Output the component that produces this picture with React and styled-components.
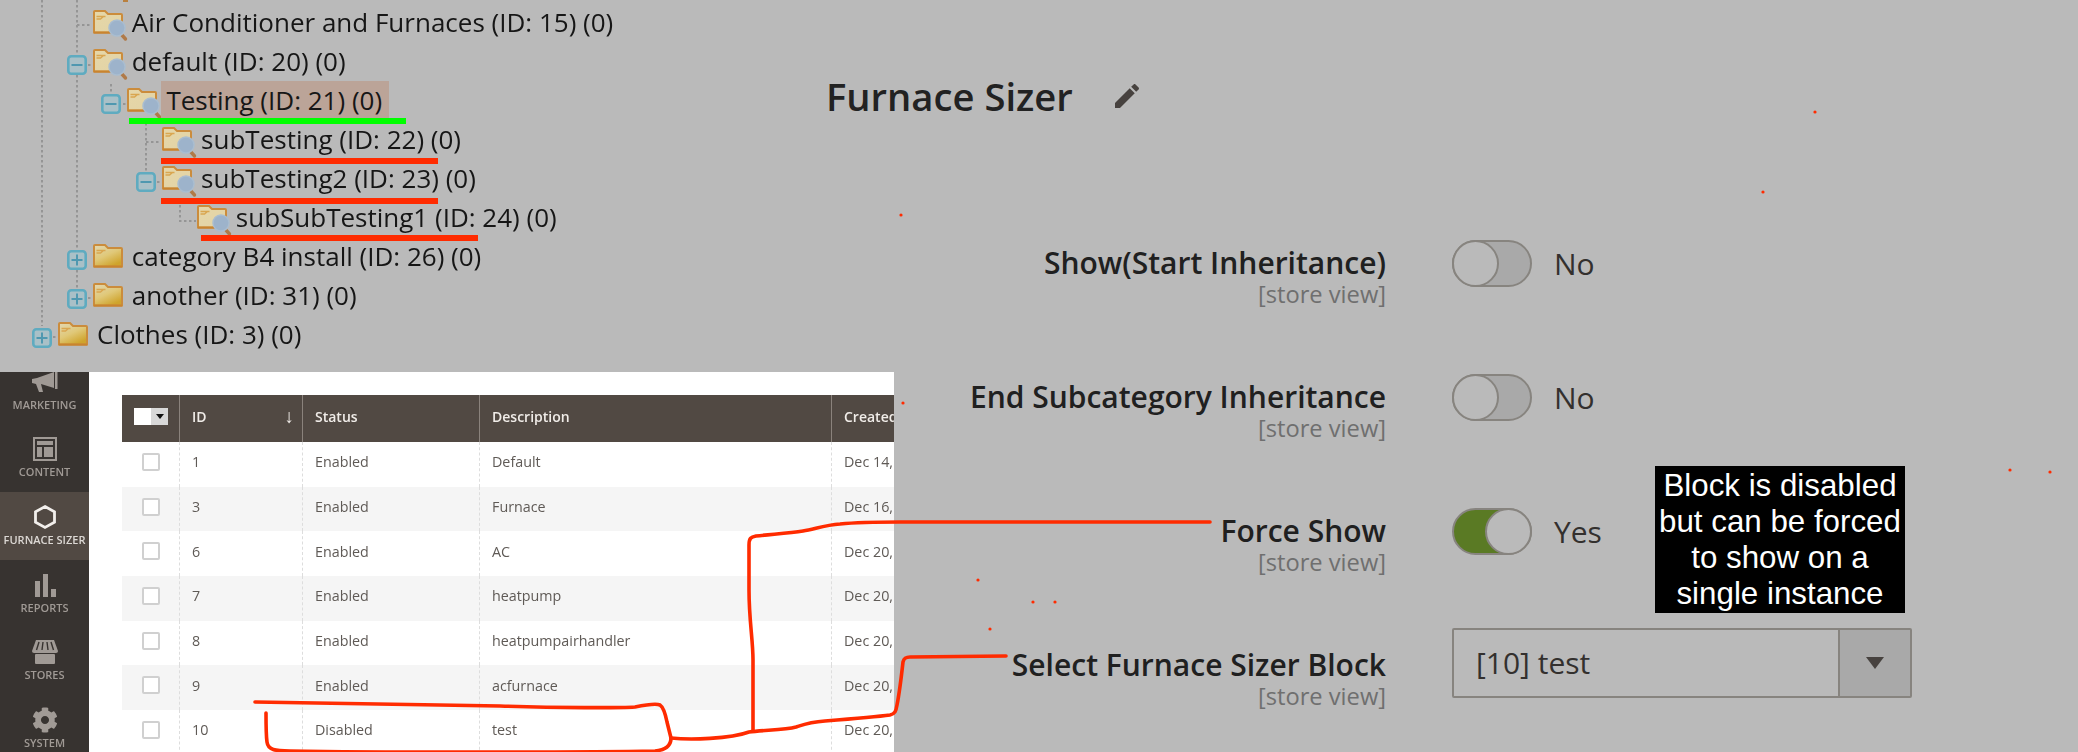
import React from 'react'
import styled, { createGlobalStyle } from 'styled-components'
import { FaCog } from 'react-icons/fa'

const GlobalStyle = createGlobalStyle`
    html, body {
        margin: 0;
        padding: 0;
        background: #bababa;
    }
    body {
        font-family: "Open Sans", "Noto Sans", sans-serif;
        overflow: hidden;
    }
`

const Page = styled.div`
    position: relative;
    width: 2078px;
    height: 752px;
    display: flex;
    overflow: hidden;
    background: #bababa;
`
const LeftCol = styled.div`
    width: 826px;
    flex: none;
    display: flex;
    flex-direction: column;
`
const RightCol = styled.div`
    flex: 1;
    padding-top: 73px;
`

/* ---- category tree ---- */
const Tree = styled.div`
    position: relative;
    height: 372px;
    padding-top: 2px;
    box-sizing: border-box;
    filter: blur(0.45px);
`
const TreeLines = styled.svg`
    position: absolute;
    left: 0;
    top: 0;
`
const TreeRow = styled.div`
    position: relative;
    height: 39px;
    display: flex;
    align-items: center;
    padding-left: ${p => 32 + p.$level * 34.7}px;
`
const Expander = styled.span`
    width: 20px;
    height: 20px;
    margin: 8px 6px 0 0;
    flex: none;
`
const Folder = styled.svg`
    width: 30px;
    height: 24px;
    flex: none;
    overflow: visible;
`
const TreeLabel = styled.span`
    margin-left: ${p => (p.$selected ? 4 : 9)}px;
    padding: ${p => (p.$selected ? '0 7px 0 5px' : '0')};
    height: 38px;
    line-height: 38px;
    font-size: 26px;
    color: #161616;
    white-space: nowrap;
    background: ${p => (p.$selected ? '#bba498' : 'transparent')};
`

const ExpanderIcon = ({ open }) => (
    <Expander>
        <svg width="20" height="20" viewBox="0 0 20 20">
            <rect x="1.3" y="1.3" width="17.4" height="17.4" rx="3" fill="#a9c0c7" stroke="#5fabc0" strokeWidth="2.6" />
            <rect x="4.5" y="9" width="11" height="2" fill="#4f98b0" />
            {!open && <rect x="9" y="4.5" width="2" height="11" fill="#4f98b0" />}
        </svg>
    </Expander>
)

const FolderIcon = ({ search }) => (
    <Folder viewBox="0 0 30 24">
        <defs>
            <linearGradient id="openBody" x1="0" y1="0" x2="1" y2="1">
                <stop offset="0" stopColor="#e6d7a8" />
                <stop offset="1" stopColor="#e2d3a6" />
            </linearGradient>
            <linearGradient id="closedBody" x1="0" y1="0" x2="0.6" y2="1">
                <stop offset="0" stopColor="#e2d8b4" />
                <stop offset="0.55" stopColor="#e0c878" />
                <stop offset="1" stopColor="#cfa42c" />
            </linearGradient>
        </defs>
        <path
            d="M1 22.5V2a1 1 0 0 1 1-1h10l3 3h13a1 1 0 0 1 1 1v17.5z"
            fill={search ? 'url(#openBody)' : 'url(#closedBody)'}
            stroke="#cb8c3c"
            strokeWidth="2"
        />
        <path d="M3.5 6.5h9M3.5 9h4l3-2.5" fill="none" stroke="#d9a650" strokeWidth="1.4" />
        <rect x="1" y="21.6" width="28" height="2" fill="#c9842f" />
        {search && (
            <g>
                <path d="M28 24l4.5 5" stroke="#b07a48" strokeWidth="3.4" strokeLinecap="round" />
                <circle cx="24" cy="18" r="8" fill="#9db3cb" stroke="#a9bdd0" strokeWidth="1.5" />
            </g>
        )}
    </Folder>
)

const treeRows = [
    { level: 1, search: true, text: 'Air Conditioner and Furnaces (ID: 15) (0)' },
    { level: 1, search: true, toggle: 'open', text: 'default (ID: 20) (0)' },
    { level: 2, search: true, toggle: 'open', selected: true, text: 'Testing (ID: 21) (0)' },
    { level: 3, search: true, text: 'subTesting (ID: 22) (0)' },
    { level: 3, search: true, toggle: 'open', text: 'subTesting2 (ID: 23) (0)' },
    { level: 4, search: true, text: 'subSubTesting1 (ID: 24) (0)' },
    { level: 1, toggle: 'closed', text: 'category B4 install (ID: 26) (0)' },
    { level: 1, toggle: 'closed', text: 'another (ID: 31) (0)' },
    { level: 0, toggle: 'closed', text: 'Clothes (ID: 3) (0)' },
]

/* ---- grid panel ---- */
const Panel = styled.div`
    width: 894px;
    height: 380px;
    display: flex;
    overflow: hidden;
    background: #fff;
    filter: blur(0.6px);
`
const Sidebar = styled.div`
    width: 89px;
    flex: none;
    margin-top: -15px;
    background: #373330;
`
const NavItem = styled.div`
    height: 67.7px;
    display: flex;
    flex-direction: column;
    align-items: center;
    justify-content: flex-end;
    padding-bottom: 13px;
    box-sizing: border-box;
    font-size: 11px;
    font-weight: 600;
    white-space: nowrap;
    color: ${p => (p.$active ? '#dcd8d4' : '#a09a95')};
    background: ${p => (p.$active ? '#514943' : 'transparent')};
`
const NavIcon = styled.svg`
    width: 30px;
    height: 30px;
`
const GearIcon = styled(FaCog)`
    width: 26px;
    height: 26px;
    margin: 2px 0;
`
const TableWrap = styled.div`
    flex: 1;
    padding: 23px 0 0 33px;
    min-width: 0;
    overflow: hidden;
`
const columns = '58px 123px 177px 352px 120px'
const HeadRow = styled.div`
    display: grid;
    grid-template-columns: ${columns};
    height: 47px;
    background: #514943;
    color: #f0ece8;
    font-size: 14px;
    font-weight: 600;
`
const HeadCell = styled.div`
    position: relative;
    display: flex;
    align-items: center;
    padding: 0 0 5px 12px;
    border-right: 1px solid #8a827c;
    box-sizing: border-box;
    white-space: nowrap;
    &:last-child {
        border-right: 0;
    }
`
const BodyRow = styled.div`
    display: grid;
    grid-template-columns: ${columns};
    height: 44.7px;
    background: ${p => (p.$alt ? '#f5f5f5' : '#fff')};
    color: #5f5a56;
    font-size: 14.3px;
`
const BodyCell = styled.div`
    display: flex;
    align-items: center;
    padding: 0 0 5px 12px;
    border-right: 1px dashed #ddd;
    box-sizing: border-box;
    white-space: nowrap;
    &:last-child {
        border-right: 0;
    }
`
const CheckCell = styled(BodyCell)`
    padding-left: 20px;
`
const CheckBox = styled.span`
    width: 18px;
    height: 18px;
    box-sizing: border-box;
    background: #fff;
    border: 2px solid #d0d0d0;
    border-radius: 2px;
`
const HeadSelect = styled.span`
    display: flex;
    width: 34px;
    height: 17px;
    background: #fff;
    justify-content: flex-end;
`
const HeadSelectArrow = styled.span`
    width: 17px;
    height: 17px;
    background: #d8d8d8;
    display: flex;
    align-items: center;
    justify-content: center;
    &::after {
        content: "";
        border-top: 5px solid #111;
        border-left: 4px solid transparent;
        border-right: 4px solid transparent;
    }
`
const SortArrow = styled.span`
    position: absolute;
    right: 8px;
    top: 11px;
    font-size: 19px;
    font-weight: 400;
    line-height: 20px;
`

const rows = [
    ['1', 'Enabled', 'Default', 'Dec 14,'],
    ['3', 'Enabled', 'Furnace', 'Dec 16,'],
    ['6', 'Enabled', 'AC', 'Dec 20,'],
    ['7', 'Enabled', 'heatpump', 'Dec 20,'],
    ['8', 'Enabled', 'heatpumpairhandler', 'Dec 20,'],
    ['9', 'Enabled', 'acfurnace', 'Dec 20,'],
    ['10', 'Disabled', 'test', 'Dec 20,'],
]

const navItems = [
    {
        label: 'MARKETING',
        icon: (
            <NavIcon viewBox="0 0 30 30" fill="currentColor">
                <path d="M2 12l5-1 17-6v16L11 17l2 8h-4l-3-8-4-1z" />
                <rect x="25" y="4" width="2.5" height="18" />
            </NavIcon>
        ),
    },
    {
        label: 'CONTENT',
        icon: (
            <NavIcon viewBox="0 0 30 30" fill="currentColor">
                <path fillRule="evenodd" d="M3 3h24v24H3zM5 5v20h20V5z" />
                <rect x="7" y="7" width="16" height="4" />
                <rect x="7" y="13" width="5" height="10" />
                <rect x="14" y="13" width="9" height="10" />
            </NavIcon>
        ),
    },
    {
        label: 'FURNACE SIZER',
        active: true,
        icon: (
            <NavIcon viewBox="0 0 30 30">
                <path d="M15 4.5l9.5 5.3v10.4L15 25.5l-9.5-5.3V9.8z" fill="none" stroke="#f2efec" strokeWidth="2.8" />
            </NavIcon>
        ),
    },
    {
        label: 'REPORTS',
        icon: (
            <NavIcon viewBox="0 0 30 30" fill="currentColor">
                <rect x="5" y="11" width="5" height="16" />
                <rect x="13" y="4" width="5" height="23" />
                <rect x="21" y="19" width="5" height="8" />
            </NavIcon>
        ),
    },
    {
        label: 'STORES',
        icon: (
            <NavIcon viewBox="0 0 30 30" fill="currentColor">
                <path d="M6 3h18l4 11c0 2-2 2-3 2H5c-1 0-3 0-3-2z" />
                <path d="M9 5l-2.5 8M13 5l-1 8M17 5l1 8M21 5l2.5 8" stroke="#373330" strokeWidth="1.4" />
                <rect x="5" y="17" width="20" height="10" rx="1" />
            </NavIcon>
        ),
    },
    { label: 'SYSTEM', icon: <GearIcon /> },
]

/* ---- form on the right ---- */
const TitleRow = styled.div`
    display: flex;
    align-items: center;
    gap: 38px;
    height: 46px;
    margin-bottom: 121px;
`
const Title = styled.h1`
    margin: 0;
    font-size: 38.2px;
    font-weight: 600;
    color: #222;
    line-height: 46px;
`
const EditIcon = styled.svg`
    width: 32px;
    height: 32px;
    fill: #47423f;
`
const FormRow = styled.div`
    display: grid;
    grid-template-columns: 560px 460px;
    column-gap: 66px;
    height: 134px;
    align-items: start;
`
const LabelBlock = styled.div`
    text-align: right;
    padding-top: 5px;
`
const FieldLabel = styled.div`
    font-size: 30px;
    font-weight: 600;
    line-height: 35px;
    color: #202020;
`
const ScopeNote = styled.div`
    font-size: 23.7px;
    line-height: 28px;
    color: #6f6f6f;
`
const Control = styled.div`
    height: 47px;
    display: flex;
    align-items: center;
    gap: 22px;
    font-size: 30px;
    color: #33302e;
`
const Toggle = styled.span`
    position: relative;
    width: 80px;
    height: 47px;
    flex: none;
    box-sizing: border-box;
    border: 2px solid #87847f;
    border-radius: 24px;
    background: ${p => (p.$on ? '#5a7a24' : '#a9a9a9')};
`
const ToggleKnob = styled.span`
    position: absolute;
    top: -2px;
    ${p => (p.$on ? 'right: -2px;' : 'left: -2px;')}
    width: 47px;
    height: 47px;
    box-sizing: border-box;
    border: 2px solid #87847f;
    border-radius: 50%;
    background: #bababa;
`
const Note = styled.div`
    width: 250px;
    height: 147px;
    flex: none;
    margin: 16px 7px 0 auto;
    box-sizing: border-box;
    padding-top: 2px;
    background: #000;
    color: #fff;
    font-family: "Liberation Sans", Arial, sans-serif;
    font-size: 31.3px;
    line-height: 36px;
    text-align: center;
    white-space: nowrap;
`
const Select = styled.div`
    width: 460px;
    height: 70px;
    flex: none;
    margin-top: -5px;
    box-sizing: border-box;
    display: flex;
    border: 2px solid #87847f;
    border-radius: 2px;
`
const SelectValue = styled.div`
    flex: 1;
    padding-left: 22px;
    line-height: 66px;
`
const SelectButton = styled.div`
    width: 70px;
    display: flex;
    align-items: center;
    justify-content: center;
    background: #a9a9a9;
    border-left: 2px solid #87847f;
    &::after {
        content: "";
        border-top: 12px solid #47423f;
        border-left: 9px solid transparent;
        border-right: 9px solid transparent;
    }
`

/* ---- things drawn on top of the screenshot ---- */
const Annotations = styled.svg`
    position: absolute;
    left: 0;
    top: 0;
    pointer-events: none;
`

const redDots = [
    [1815, 112], [1763, 192], [901, 215], [903, 403], [978, 580],
    [990, 629], [1033, 602], [1055, 602], [2010, 470], [2050, 472],
]

const formRows = [
    { label: 'Show(Start Inheritance)', value: 'No' },
    { label: 'End Subcategory Inheritance', value: 'No' },
    { label: 'Force Show', value: 'Yes', on: true, note: true },
]

const App = () => {
    return (
        <Page>
            <GlobalStyle />
            <LeftCol>
                <Tree>
                    <TreeLines width="640" height="372">
                        <g stroke="#959595" strokeWidth="2" strokeDasharray="2.5 2.5" fill="none">
                            <path d="M42 0V326" />
                            <path d="M77 0V55M77 75V288" />
                            <path d="M77 25H91" />
                            <path d="M111 84V92" />
                            <path d="M146 123V172" />
                            <path d="M146 142H160" />
                            <path d="M180 205V221H196" />
                            <path d="M88 65H91M123 104H126M157 182H160M88 298H91M53 337H56" />
                        </g>
                        <rect x="123" y="0" width="5" height="2" fill="#b9803e" />
                    </TreeLines>
                    {treeRows.map(row => (
                        <TreeRow key={row.text} $level={row.level}>
                            {row.toggle ? <ExpanderIcon open={row.toggle === 'open'} /> : <Expander />}
                            <FolderIcon search={row.search} />
                            <TreeLabel $selected={row.selected}>{row.text}</TreeLabel>
                        </TreeRow>
                    ))}
                </Tree>
                <Panel>
                    <Sidebar>
                        {navItems.map(item => (
                            <NavItem key={item.label} $active={item.active}>
                                {item.icon}
                                {item.label}
                            </NavItem>
                        ))}
                    </Sidebar>
                    <TableWrap>
                        <HeadRow>
                            <HeadCell>
                                <HeadSelect><HeadSelectArrow /></HeadSelect>
                            </HeadCell>
                            <HeadCell>ID<SortArrow>↓</SortArrow></HeadCell>
                            <HeadCell>Status</HeadCell>
                            <HeadCell>Description</HeadCell>
                            <HeadCell>Created</HeadCell>
                        </HeadRow>
                        {rows.map((row, i) => (
                            <BodyRow key={row[0]} $alt={i % 2 === 1}>
                                <CheckCell><CheckBox /></CheckCell>
                                {row.map((cell, j) => <BodyCell key={j}>{cell}</BodyCell>)}
                            </BodyRow>
                        ))}
                    </TableWrap>
                </Panel>
            </LeftCol>
            <RightCol>
                <TitleRow>
                    <Title>Furnace Sizer</Title>
                    <EditIcon viewBox="0 0 24 24">
                        <path d="M3 17.25V21h3.75L17.81 9.94l-3.75-3.75L3 17.25zM20.71 7.04c.39-.39.39-1.02 0-1.41l-2.34-2.34c-.39-.39-1.02-.39-1.41 0l-1.83 1.83 3.75 3.75 1.83-1.83z" />
                    </EditIcon>
                </TitleRow>
                {formRows.map(row => (
                    <FormRow key={row.label}>
                        <LabelBlock>
                            <FieldLabel>{row.label}</FieldLabel>
                            <ScopeNote>[store view]</ScopeNote>
                        </LabelBlock>
                        <Control>
                            <Toggle $on={row.on}><ToggleKnob $on={row.on} /></Toggle>
                            {row.value}
                            {row.note && (
                                <Note>Block is disabled<br />but can be forced<br />to show on a<br />single instance</Note>
                            )}
                        </Control>
                    </FormRow>
                ))}
                <FormRow>
                    <LabelBlock>
                        <FieldLabel>Select Furnace Sizer Block</FieldLabel>
                        <ScopeNote>[store view]</ScopeNote>
                    </LabelBlock>
                    <Control>
                        <Select>
                            <SelectValue>[10] test</SelectValue>
                            <SelectButton />
                        </Select>
                    </Control>
                </FormRow>
            </RightCol>
            <Annotations width="2078" height="752" viewBox="0 0 2078 752">
                <rect x="129" y="118" width="277" height="6" fill="#00ff00" />
                <rect x="161" y="158" width="277" height="6" fill="#ff2b00" />
                <rect x="161" y="198" width="277" height="6" fill="#ff2b00" />
                <rect x="201" y="235" width="277" height="6" fill="#ff2b00" />
                <g fill="none" stroke="#ff2b00" strokeWidth="3.6" strokeLinecap="round" strokeLinejoin="round">
                    <path d="M255 702C360 703 460 705 500 706C560 708 620 708 635 707C645 705 655 703 660 705C663 707 665 712 667 722L671 738C671 746 665 750 655 751C600 752 400 753 290 751C275 751 268 750 267 742C266 735 266 725 266 713" />
                    <path d="M671 738C690 740 730 739 749 732C765 730 785 730 796 727C805 724 810 722 825 721C850 719 875 717 890 715C895 714 896 711 897 705C899 695 901 680 903 662C904 658 906 657 910 657L1006 656" />
                    <path d="M753 731V660C753 640 749 620 749 590V545C749 538 751 537 756 536C775 534 790 533 803 531C815 529 825 525 840 524C860 522 880 522 900 522L1210 522" />
                </g>
                {redDots.map(([cx, cy]) => (
                    <circle key={`${cx}-${cy}`} cx={cx} cy={cy} r="1.6" fill="#ff2b00" />
                ))}
            </Annotations>
        </Page>
    )
}

export default App
